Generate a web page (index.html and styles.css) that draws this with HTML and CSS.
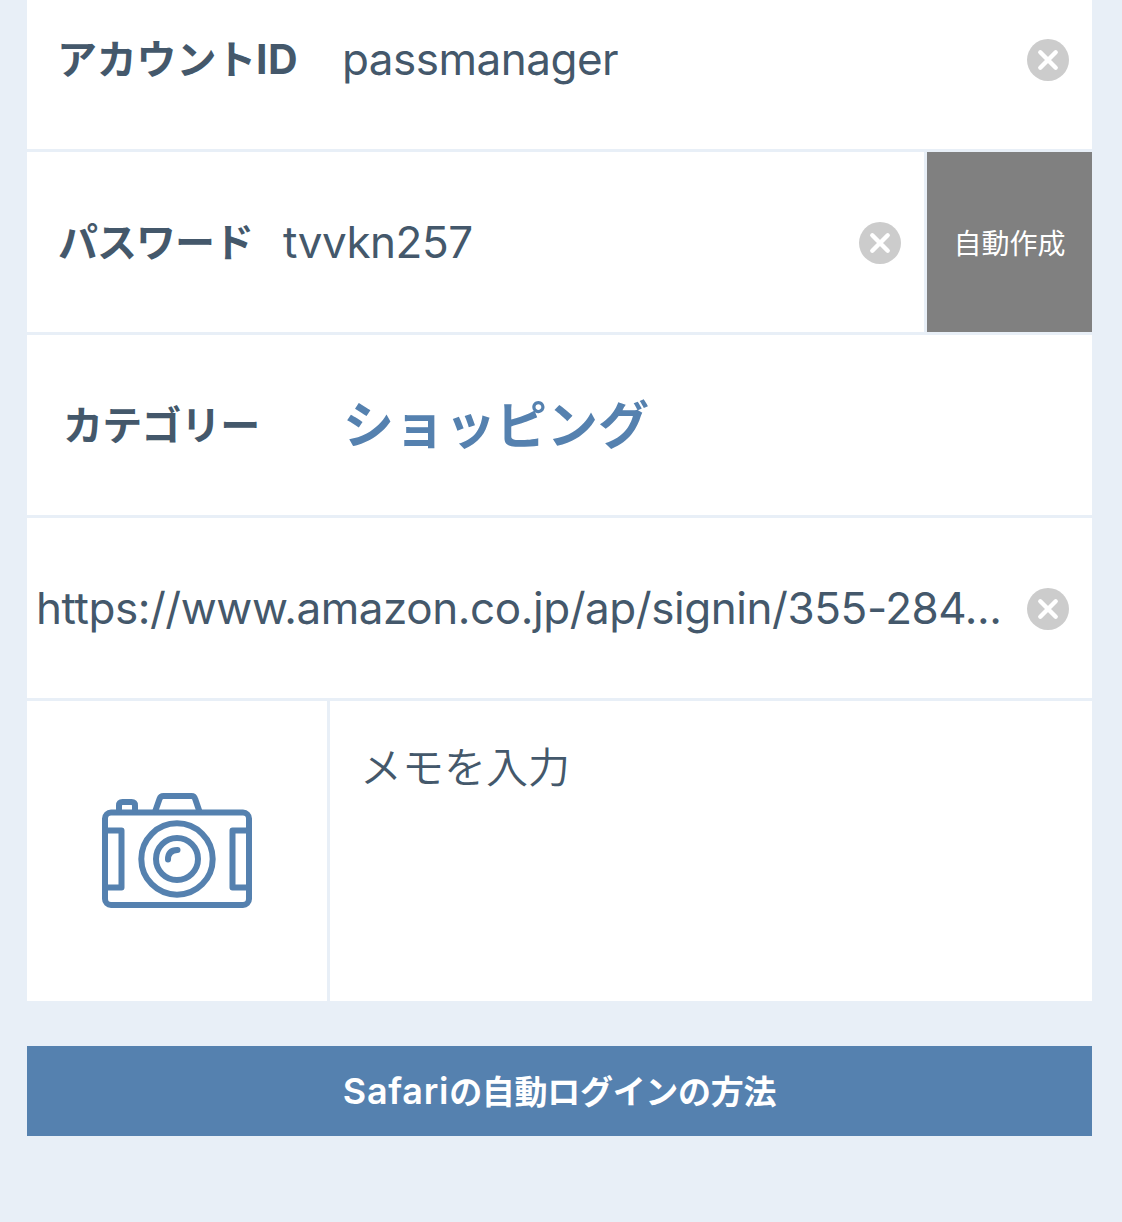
FILE: index.html
```html
<!DOCTYPE html>
<html lang="ja">
<head>
<meta charset="utf-8">
<title>アカウント編集</title>
<link rel="stylesheet" href="styles.css">
</head>
<body>
<svg width="0" height="0" class="defs" aria-hidden="true">
  <symbol id="clear" viewBox="0 0 42 42">
    <circle cx="21" cy="21" r="21" fill="#ccc"/>
    <path d="M13.3 13.3 28.7 28.7M28.7 13.3 13.3 28.7" fill="none" stroke="#fff" stroke-width="4.4" stroke-linecap="round"/>
  </symbol>
</svg>
<main class="page">
  <div class="form">
    <div class="row row-account">
      <span class="label label-account">アカウント<span class="latin">ID</span></span>
      <span class="value value-account">passmanager</span>
      <svg class="clear"><use href="#clear"/></svg>
    </div>
    <div class="split">
      <div class="row row-password">
        <span class="label label-password">パスワード</span>
        <span class="value value-password">tvvkn257</span>
        <svg class="clear"><use href="#clear"/></svg>
      </div>
      <div class="generate">自動作成</div>
    </div>
    <div class="row row-category">
      <span class="label label-category">カテゴリー</span>
      <span class="category">ショッピング</span>
    </div>
    <div class="row row-url">
      <span class="value value-url">https://www.amazon.co.jp/ap/signin/355-284...</span>
      <svg class="clear"><use href="#clear"/></svg>
    </div>
    <div class="split">
      <div class="photo">
        <svg class="camera" viewBox="0 0 150 115" fill="none" stroke="#5581af" stroke-width="6" stroke-linecap="round" stroke-linejoin="round">
          <rect x="3" y="19.500" width="144" height="92.500" rx="6"/>
          <path d="M17 18V12.500Q17 9 20.500 9H29.500Q33 9 33 12.500V18"/>
          <path d="M53.300 18 57.500 6Q58.500 3 61.500 3H89.500Q92.300 3 93.200 6L97.300 18"/>
          <path d="M4 37.500H19.500V94.500H4M146 37.500H130.500V94.500H146"/>
          <circle cx="75" cy="66" r="35.700"/>
          <circle cx="75" cy="66" r="21"/>
          <path d="M66 66.500Q66 57 75.500 57"/>
        </svg>
      </div>
      <div class="memo"><span class="memo-text">メモを入力</span></div>
    </div>
  </div>
  <div class="button"><span class="button-latin">Safari</span><span class="button-text">の自動ログインの方法</span></div>
</main>
</body>
</html>
```
FILE: styles.css
```css
* { box-sizing: border-box; }
body {
  margin: 0;
  background: #e8eff7;
  color: #44586b;
  font-family: Inter, "Noto Sans CJK JP", sans-serif;
}
.defs { position: absolute; }
.page { padding: 0 30px 0 27px; height: 1222px; overflow: hidden; }
.form { display: flex; flex-direction: column; gap: 3px; }
.row {
  display: flex;
  align-items: center;
  height: 180px;
  padding-top: 2px;
  padding-right: 23px;
  background: #fff;
  white-space: nowrap;
}
.row-account { height: 149px; padding-top: 0; padding-bottom: 29px; }
.split { display: flex; gap: 3px; }
.row-password { flex: 1; }
.clear { width: 42px; height: 42px; margin-left: auto; flex: none; }
.label { font-weight: 700; font-size: 40px; line-height: 60px; flex: none; }
.label-account { width: 285px; padding: 0 0 2px 30px; letter-spacing: -0.2px; }
.label-account .latin { font-size: 41px; letter-spacing: 0.4px; }
.label-password { width: 256px; padding-left: 31px; letter-spacing: -1px; }
.label-category { width: 316px; padding-left: 36px; letter-spacing: -0.7px; }
.value { font-size: 44px; line-height: 60px; letter-spacing: -0.5px; padding-bottom: 2px; }
.value-account { margin-left: 30px; }
.value-url { padding-left: 9px; letter-spacing: -0.44px; }
.category { color: #5581af; font-size: 51px; font-weight: 700; line-height: 70px; }
.generate {
  width: 165px;
  display: flex;
  align-items: center;
  justify-content: center;
  padding-bottom: 1px;
  background: #808080;
  color: #fff;
  font-size: 28px;
}
.photo {
  width: 300px;
  height: 300px;
  display: flex;
  align-items: center;
  justify-content: center;
  padding-bottom: 1px;
  background: #fff;
}
.camera { width: 150px; height: 115px; }
.memo { flex: 1; background: #fff; padding: 37px 0 0 30px; }
.memo-text { display: block; font-size: 42px; line-height: 60px; font-weight: 350; }
.button {
  display: flex;
  align-items: baseline;
  justify-content: center;
  height: 90px;
  padding-top: 21px;
  margin-top: 45px;
  background: #5581af;
  color: #fff;
  font-size: 33px;
  font-weight: 600;
  line-height: 48px;
}
.button-latin { font-size: 36px; letter-spacing: 0.7px; }
.button-text { letter-spacing: -0.3px; }
```
